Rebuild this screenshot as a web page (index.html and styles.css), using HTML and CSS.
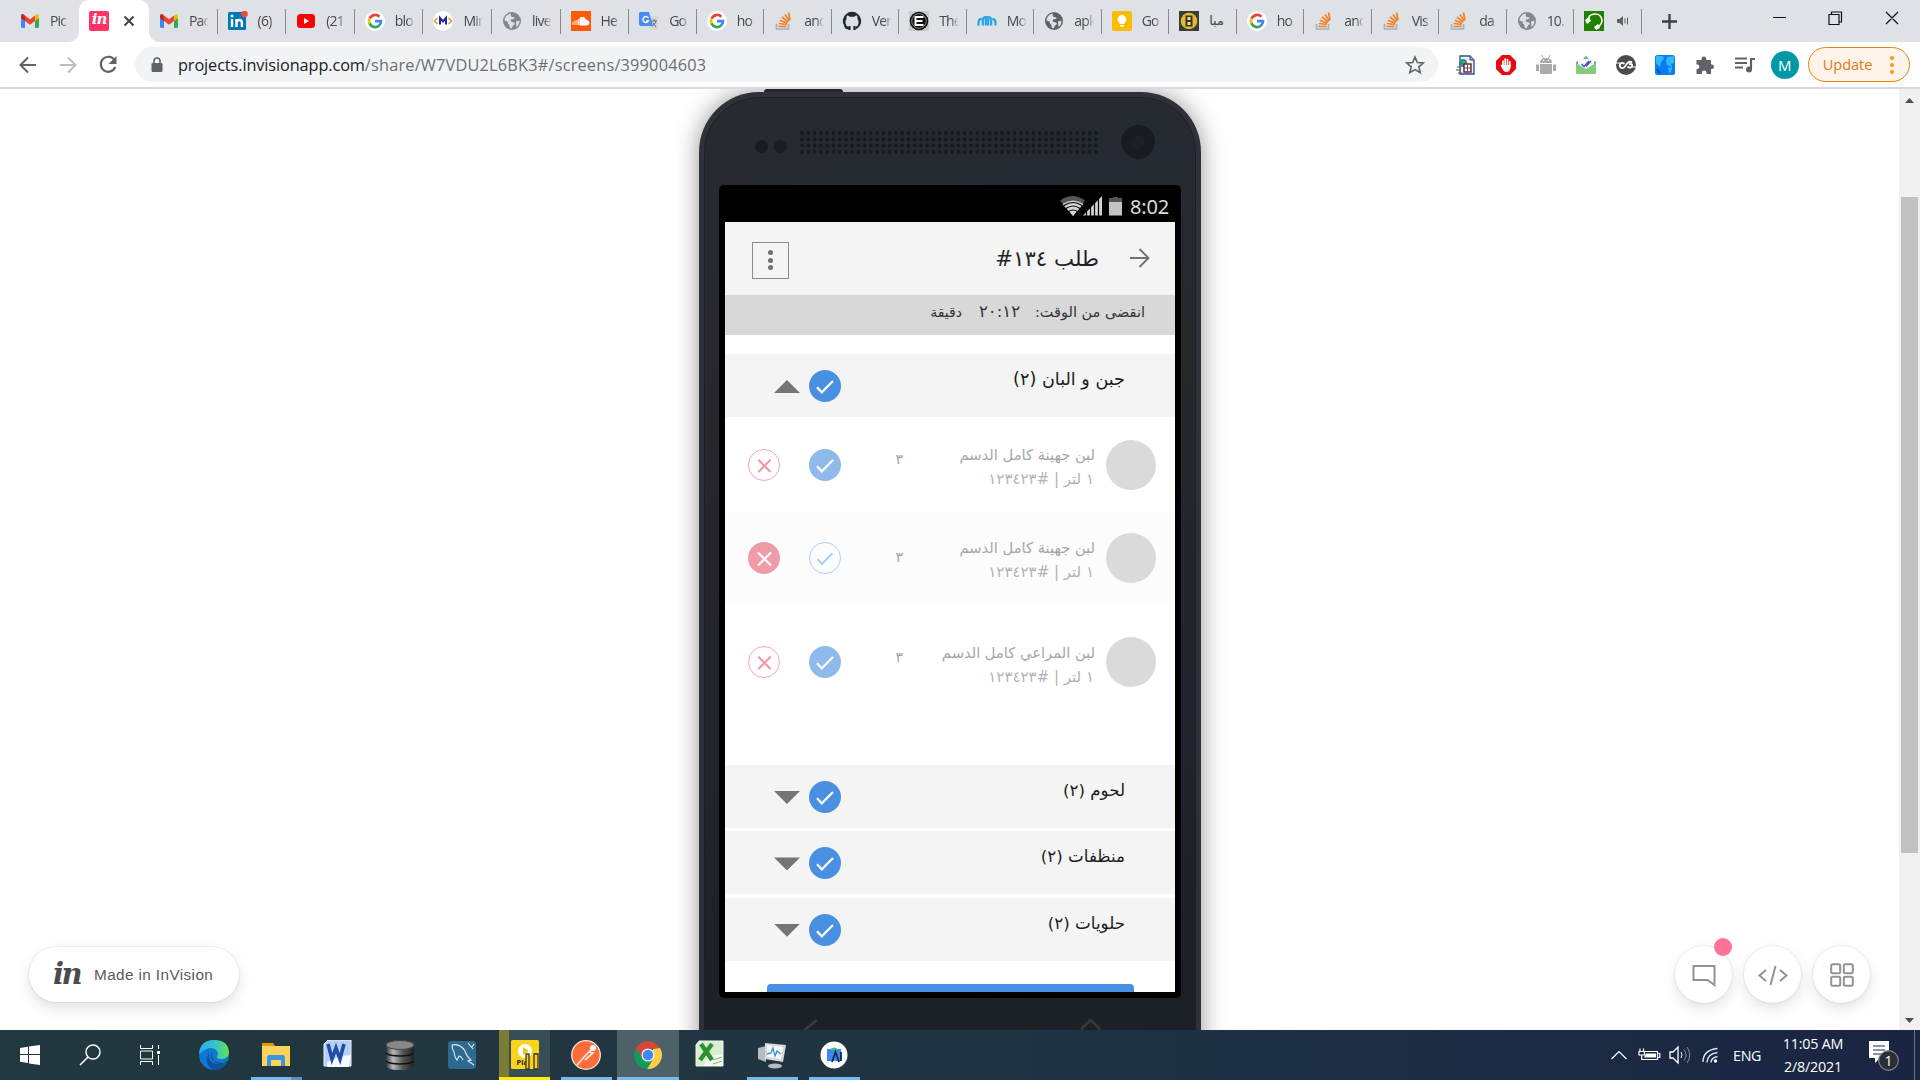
FILE: index.html
```html
<!DOCTYPE html>
<html lang="en">
<head>
<meta charset="utf-8">
<title>InVision prototype</title>
<link rel="stylesheet" href="styles.css">
</head>
<body>
<svg class="sprite" aria-hidden="true">
  <symbol id="gmail" viewBox="0 0 20 20"><path d="M1 5v10.500q0 1.500 1.500 1.500H5V8z" fill="#4285f4"/><path d="M19 5v10.500q0 1.500-1.500 1.500H15V8z" fill="#34a853"/><path d="M15 4.500l1-.9q3-1.500 3 1.600V7l-4 3z" fill="#fbbc04"/><path d="M5 4.500L10 8.300l5-3.800V10l-5 3.800L5 10z" fill="#ea4335"/><path d="M1 7V5.200q0-3.100 3-1.600l1 .9V10z" fill="#c5221f"/></symbol>
  <symbol id="google" viewBox="0 0 20 20"><circle cx="10" cy="10" r="10" fill="#fff"/><g fill="none" stroke-width="2.700"><path d="M4.600 7.500A6 6 0 0 1 14.400 5.800" stroke="#ea4335"/><path d="M4.600 12.600A6 6 0 0 1 4.600 7.400" stroke="#fbbc05"/><path d="M4.500 12.400A6 6 0 0 0 14 14.500" stroke="#34a853"/><path d="M10 10.200h6A6 6 0 0 1 13.800 14.700" stroke="#4285f4"/></g></symbol>
  <symbol id="so" viewBox="0 0 20 20"><path d="M2.500 13v5h12v-5" fill="none" stroke="#a9b0b8" stroke-width="1.700"/><g stroke="#f48024" stroke-width="1.700"><path d="M4.500 15.500h8M4.800 12.500l7.900 1M5.800 9.300l7.400 3M8 6l6.200 5M11 3.500l4.500 6.500M14.500 1.500l1.500 7.500"/></g></symbol>
  <symbol id="globe" viewBox="0 0 20 20"><circle cx="10" cy="10" r="9" fill="currentColor"/><path d="M2.500 9.500Q3 3.500 9 2.500q-1 3 1 3.500 3 0 2.500 1.500-2 1-3.500 1-1 2 1 2.500 2.500 0 3 2l-2 1.500-1.500 3Q7 17 7.500 14 5.500 12.500 5.500 10.500z" fill="#dee1e6"/><path d="M14 10.500l3.500-1q0 4-3 6.500z" fill="#dee1e6"/></symbol>
  <symbol id="check" viewBox="0 0 32 32"><path d="M8 17.300l4.800 5L24 11" fill="none" stroke="currentColor" stroke-width="2.200"/></symbol>
  <symbol id="cross" viewBox="0 0 32 32"><path d="M10 10.500l13 13M23 10.500l-13 13" fill="none" stroke="currentColor" stroke-width="2.200"/></symbol>
</svg>

<header class="tabs">
  <div class="tab first"><svg class="fav"><use href="#gmail"/></svg><span>Pic</span></div>
  <div class="tab active"><b class="in-fav">in</b><svg class="close" viewBox="0 0 12 12"><path d="M1.500 1.500l9 9M10.500 1.500l-9 9"/></svg></div>
  <div class="tab"><svg class="fav"><use href="#gmail"/></svg><span>Pac</span></div>
  <div class="tab"><svg class="fav" viewBox="0 0 20 20"><rect y="1" width="18" height="18" rx="1.500" fill="#0077b5"/><path d="M4 8v8M8.500 16V8M8.500 12q0-3 2.700-3t2.700 3v4" stroke="#fff" stroke-width="2.400" fill="none"/><circle cx="4" cy="5" r="1.500" fill="#fff"/><circle cx="16.500" cy="3" r="3.300" fill="#ee4b3e"/></svg><span>(6)</span></div>
  <div class="tab"><svg class="fav" viewBox="0 0 20 20"><rect x="1" y="3" width="18" height="14" rx="3.500" fill="#f00"/><path d="M8 7v6l5-3z" fill="#fff"/></svg><span>(21</span></div>
  <div class="tab"><svg class="fav"><use href="#google"/></svg><span>blo</span></div>
  <div class="tab"><svg class="fav" viewBox="0 0 20 20"><circle cx="10" cy="10" r="10" fill="#fff"/><path d="M4.500 7L1.500 10l3 3M15.500 7l3 3-3 3" stroke="#e09a2b" stroke-width="1.600" fill="none"/><path d="M7 13.500V7l3 3.500L13 7v6.500" stroke="#182a94" stroke-width="2" fill="none"/></svg><span>Mir</span></div>
  <div class="tab"><svg class="fav grey"><use href="#globe"/></svg><span>live</span></div>
  <div class="tab"><svg class="fav" viewBox="0 0 20 20"><path d="M0 0h20v20H0z" fill="#ff5a0a"/><path d="M9 14V7q5-2 6 2.500 3-.2 3 2.200T15.500 14zM2 14v-3M4 14V9.500M6 14V9M7.700 14V8" fill="#fff" stroke="#fff"/></svg><span>He</span></div>
  <div class="tab"><svg class="fav" viewBox="0 0 20 20"><path d="M8 5h11v14h-8z" fill="#d5d7da"/><path d="M1 1h9l4 14H2q-2 0-2-2V2z" fill="#4a8af4"/><path d="M9.500 7A3 3 0 1 0 9.500 10H7" stroke="#fff" stroke-width="1.300" fill="none"/><path d="M12 10h6M15 8v2M17 10q-1 4-4 5M14 12l3 4" stroke="#5d7181" fill="none"/></svg><span>Go</span></div>
  <div class="tab"><svg class="fav"><use href="#google"/></svg><span>ho</span></div>
  <div class="tab"><svg class="fav"><use href="#so"/></svg><span>and</span></div>
  <div class="tab"><svg class="fav" viewBox="0 0 20 20"><path d="M7.500 19v-4M12.500 19v-4M7.500 17q-3 1-4.500-2" stroke="#24292e" stroke-width="2.200" fill="none"/><path d="M10 .8A9.200 9.200 0 0 0 6.500 18.500V16q-3-1-3-5 0-2 1.200-3.200-.5-1.600.3-3.300 1.400 0 2.800 1.200h4.400Q13.600 4.500 15 4.500q.8 1.700.3 3.300 1.200 1.200 1.200 3.200 0 4-3 5v2.500A9.200 9.200 0 0 0 10 .8z" fill="#24292e"/></svg><span>Ver</span></div>
  <div class="tab"><svg class="fav" viewBox="0 0 20 20"><path d="M0 0h20v20H0z" fill="#c8cacd"/><circle cx="10" cy="10" r="9.300" fill="#111"/><circle cx="10" cy="10" r="7.300" fill="none" stroke="#888"/><path d="M14.500 6H6.500v8h8M6.500 10h7" stroke="#fff" stroke-width="2" fill="none"/></svg><span>The</span></div>
  <div class="tab"><svg class="fav" viewBox="0 0 20 20"><path d="M1.500 14.500V12q0-3.500 3-4.500M5.800 14.500V9.500q0-3.500 3-3.500v8.500M11.200 14.500V6q3 0 3 3.500v5M15.500 7.500q3 1 3 4.500v2.500" stroke="#26a3e4" stroke-width="2.200" fill="none"/></svg><span>Mo</span></div>
  <div class="tab"><svg class="fav dark"><use href="#globe"/></svg><span>apk</span></div>
  <div class="tab"><svg class="fav" viewBox="0 0 20 20"><rect width="20" height="20" rx="2" fill="#fbbc04"/><path d="M10 4a4.300 4.300 0 0 0-2.500 7.800V13h5v-1.200A4.300 4.300 0 0 0 10 4zM8 14h4v1.600H8z" fill="#fff"/></svg><span>Go</span></div>
  <div class="tab"><svg class="fav" viewBox="0 0 20 20"><path d="M0 0h20v20H0z" fill="#3c3c35"/><circle cx="10" cy="10" r="8.300" fill="#e0b93c"/><path d="M6.500 4.500h7v11h-7z" fill="#3a3420"/><path d="M8.500 6h3v3h-3zM8.500 11h3v3h-3z" fill="#f4dc7a"/></svg><span class="ar">مبا</span></div>
  <div class="tab"><svg class="fav"><use href="#google"/></svg><span>ho</span></div>
  <div class="tab"><svg class="fav"><use href="#so"/></svg><span>and</span></div>
  <div class="tab"><svg class="fav"><use href="#so"/></svg><span>Vis</span></div>
  <div class="tab"><svg class="fav"><use href="#so"/></svg><span>da</span></div>
  <div class="tab"><svg class="fav grey"><use href="#globe"/></svg><span>10.</span></div>
  <div class="tab"><svg class="fav" viewBox="0 0 20 20"><path d="M0 0h20v20H0z" fill="#218000"/><path d="M4 10q0-7 7-7 6 0 7 6 0 4-4 7" stroke="#fff" stroke-width="1.600" fill="none"/><path d="M1 9l4-3 2 4-4 3zM10 16l4-3 2 4-4 2z" fill="#fff"/></svg><svg class="sound" viewBox="0 0 14 12"><path d="M1 4h2.500L7 1v10L3.500 8H1z" fill="#5f6368"/><path d="M9 3.500v5M11.500 2.500v7" stroke="#5f6368"/></svg></div>
  <svg class="plus" viewBox="0 0 15 15"><path d="M7.500 0v15M0 7.500h15"/></svg>
  <svg class="winctl" viewBox="0 0 126 14"><path d="M0 6.500h13M56 3.500h10v10H56zM58.500 3V1h10v10h-2M113 1l12 12M125 1l-12 12"/></svg>
</header>

<div class="toolbar">
  <svg class="nav" viewBox="0 0 120 24"><g fill="none" stroke-width="2"><path d="M36 12H21M28 4.500L20.500 12l7.500 7.500" stroke="#5f6368"/><path d="M60 12h15M68 4.500l7.500 7.500-7.500 7.500" stroke="#bbbdc0"/><path d="M114.500 7A7.500 7.500 0 1 0 115.300 14" stroke="#5f6368" stroke-width="2.200"/></g><path d="M116.500 3v8h-8z" fill="#5f6368"/></svg>
  <div class="omni">
    <svg class="lock" viewBox="0 0 12 16"><rect x=".5" y="6" width="11" height="9" rx="1.200" fill="#5f6368"/><path d="M3 6V4a3 3 0 0 1 6 0v2" fill="none" stroke="#5f6368" stroke-width="1.600"/></svg>
    <span class="url"><em>projects.invisionapp.com</em>/share/W7VDU2L6BK3#/screens/399004603</span>
    <svg class="star" viewBox="0 0 20 20"><path d="M10 2l2.300 5.500 6 .5-4.500 3.900 1.400 5.800L10 14.600l-5.200 3.100 1.400-5.800L1.700 8l6-.5z" fill="none" stroke="#5f6368" stroke-width="1.600"/></svg>
  </div>
  <div class="exts">
    <svg viewBox="0 0 20 20"><path d="M4 1h10l4 4v14H4z" fill="#edf2fa" stroke="#2f4e86" stroke-width="1.300"/><path d="M14 1v4h4" fill="#8da8d4" stroke="#2f4e86"/><circle cx="7" cy="8" r="4" fill="#2688a5"/><path d="M5 6l3-1 2 3-3 1z" fill="#42b13f"/><path d="M8 9h7v8H8z" fill="#fff" stroke="#7c2434" stroke-width="1.500"/><path d="M8 13h7M11.500 9v8M1 12h4M0 15h5M2 18h4" stroke="#555"/></svg>
    <svg viewBox="0 0 20 20"><path d="M6 0h8l6 6v8l-6 6H6l-6-6V6z" fill="#e60b12"/><path d="M7 11V6M9.200 10V4M11.500 10V4.500M13.800 11V6.500" stroke="#fff" stroke-width="1.700" stroke-linecap="round"/><path d="M6.200 10h8.500q0 7-4 7-3 0-4.200-3L4.500 10.500l1-1z" fill="#fff"/></svg>
    <svg viewBox="0 0 20 20"><path d="M4 8q0-5 6-5t6 5zM4 9h12v9q0 1-1 1H5q-1 0-1-1zM0 9.500h3V16H0zM17 9.500h3V16h-3z" fill="#ababab"/><path d="M5.500 0l2 3.500M14.500 0l-2 3.500" stroke="#aaa"/><path d="M7 5.500h1M12 5.500h1" stroke="#fff"/></svg>
    <svg viewBox="0 0 20 20"><path d="M7 4l3-3 3 3M0 7l2-1v3H0zM20 7l-2-1v3h2z" fill="#57b368"/><path d="M2.500 4h15v8L10 16l-7.500-4z" fill="#f5f5fc"/><path d="M5.500 9l2.500 2.500L13 6M10 11.500L15 6" stroke="#5449c8" stroke-width="1.400" fill="none"/><path d="M0 8l10 6 10-6v10q0 1-1 1H1q-1 0-1-1z" fill="#82cb7f"/></svg>
    <svg viewBox="0 0 20 20"><circle cx="10" cy="10" r="10" fill="#4b4b4b"/><path d="M16 7.500q-2.500-2-5 1l-2 3q-2 2.500-4.500 1-1.500-2 0-4 2-1.500 4 .5M11.500 11.500q2 2 4 .5 1-1.500.5-2.500-1.500-1-3 0" stroke="#fff" stroke-width="1.800" fill="none"/><path d="M0 8h4M16 12h4" stroke="#fff"/></svg>
    <svg viewBox="0 0 20 20"><rect width="20" height="20" rx="2.500" fill="#087cf0"/><path d="M1 1h7l1 3-3 3-1 5-4-4zM12 2l7-1v7l-3 1 1 3-5-2-1-4zM13 13l4-1-1 5-2 1z" fill="#35b8fb"/><path d="M2 14l3 4" stroke="#0647bd" stroke-width="2"/></svg>
    <svg viewBox="0 0 20 20"><path d="M1.500 5h5V4a2.400 2.400 0 0 1 4.800 0v1h4.700v4.500h.7a2.300 2.300 0 0 1 0 4.600H16V19h-4.500v-1.200a2.300 2.300 0 0 0-4.600 0V19H1.500v-5h1a2.300 2.300 0 0 0 0-4.500h-1z" fill="#5f6368"/></svg>
    <svg viewBox="0 0 20 20"><path d="M0 3.500h12M0 8h12M0 12.500h8" stroke="#5f6368" stroke-width="2"/><path d="M16 14V4h4" stroke="#5f6368" stroke-width="2.200" fill="none"/><circle cx="14" cy="14.500" r="3" fill="#5f6368"/></svg>
  </div>
  <span class="avatar">M</span>
  <div class="update"><span>Update</span><svg viewBox="0 0 4 18"><circle cx="2" cy="2" r="2"/><circle cx="2" cy="9" r="2"/><circle cx="2" cy="16" r="2"/></svg></div>
</div>

<main class="view">
  <aside class="badge"><b>in</b><span>Made in InVision</span></aside>
  <div class="phone-slot">
    <i class="power"></i>
    <div class="phone">
      <div class="face">
        <div class="speaker">
          <i class="sensor"></i><i class="sensor"></i><i class="grille"></i><i class="camera"></i>
        </div>
        <div class="glass">
          <div class="status">
            <svg viewBox="0 0 62 20"><path d="M0 4.500q12.500-9 25 0L13 20z" fill="#555"/><path d="M2.500 8q10.500-7 21 0L13 20z" fill="#d2d2d2"/><path d="M4 9.500q9-6 18 0M6 12.500q7-5 14 0M8.500 15.500q4.500-3 9 0" stroke="#000" stroke-width="1.200" fill="none"/><path d="M23 19.500L42 0v19.500z" fill="#d2d2d2"/><path d="M26.500 10v10M30.500 8v12M34.500 4v16M38.500 2v18" stroke="#000" stroke-width="1.200"/><path d="M49 2h4V1h5v1h4v4H49z" fill="#555"/><path d="M49 6h13v13.500H49z" fill="#c4c4c4"/></svg>
            <span>8:02</span>
          </div>
          <div class="screen">
            <div class="head">
              <div class="more"><i></i><i></i><i></i></div>
              <h1>طلب ١٣٤#</h1>
              <svg viewBox="0 0 20 20"><path d="M0 10h19M9.500 1l9 9-9 9" fill="none" stroke="#707070" stroke-width="1.900"/></svg>
            </div>
            <div class="timer"><span class="t1">انقضى من الوقت:</span><span class="t2">٢٠:١٢</span><span class="t3">دقيقة</span></div>
            <div class="sec open"><i class="tri up"></i><svg class="dot blue"><use href="#check"/></svg><h2>جبن و البان (٢)</h2></div>
            <div class="item a"><svg class="dot redline"><use href="#cross"/></svg><svg class="dot blue"><use href="#check"/></svg><span class="qty">٣</span><div class="desc"><p>لبن جهينة كامل الدسم</p><small>١ لتر | #١٢٣٤٢٣</small></div><i class="pic"></i></div>
            <div class="item b"><svg class="dot red"><use href="#cross"/></svg><svg class="dot blueline"><use href="#check"/></svg><span class="qty">٣</span><div class="desc"><p>لبن جهينة كامل الدسم</p><small>١ لتر | #١٢٣٤٢٣</small></div><i class="pic"></i></div>
            <div class="item c"><svg class="dot redline"><use href="#cross"/></svg><svg class="dot blue"><use href="#check"/></svg><span class="qty">٣</span><div class="desc"><p>لبن المراعي كامل الدسم</p><small>١ لتر | #١٢٣٤٢٣</small></div><i class="pic"></i></div>
            <div class="sec"><i class="tri"></i><svg class="dot blue"><use href="#check"/></svg><h2>لحوم (٢)</h2></div>
            <div class="sec"><i class="tri"></i><svg class="dot blue"><use href="#check"/></svg><h2>منظفات (٢)</h2></div>
            <div class="sec"><i class="tri"></i><svg class="dot blue"><use href="#check"/></svg><h2>حلويات (٢)</h2></div>
            <div class="cta"></div>
          </div>
        </div>
        <svg class="keys" viewBox="0 0 482 36"><path d="M108 22L93 34l15 12M373 36v-6l8.500-8 8.500 8v6" fill="none" stroke="#383a42" stroke-width="2.600"/></svg>
      </div>
    </div>
  </div>
  <nav class="tools">
    <span class="tool"><svg viewBox="0 0 24 24"><path d="M1.500 3h21v19l-7-5h-14z"/></svg><i class="alert"></i></span>
    <span class="tool"><svg class="wide" viewBox="0 0 30 24"><path d="M8 7l-6.500 5.500L8 18M22 7l6.500 5.500L22 18M17.500 3l-5 19"/></svg></span>
    <span class="tool"><svg viewBox="0 0 24 24"><rect x="1.200" y="1.200" width="9" height="9" rx="1.500"/><rect x="13.800" y="1.200" width="9" height="9" rx="1.500"/><rect x="1.200" y="13.800" width="9" height="9" rx="1.500"/><rect x="13.800" y="13.800" width="9" height="9" rx="1.500"/></svg></span>
  </nav>
  <div class="scroll"><i class="up"></i><b></b><i class="down"></i></div>
</main>

<footer class="taskbar">
  <div class="app"><svg viewBox="0 0 30 30"><path d="M5 8l8-1.200V14H5zM14 6.600L25 5v9H14zM5 15h8v8L5 21.800zM14 15h11v10l-11-1.600z" fill="#fff"/></svg></div>
  <div class="app"><svg viewBox="0 0 30 30"><circle cx="18" cy="12" r="7" fill="none" stroke="#fff" stroke-width="1.400"/><path d="M13 17l-8 8" stroke="#fff" stroke-width="1.600"/></svg></div>
  <div class="app"><svg viewBox="0 0 30 30"><path d="M5.500 5v3.500h12V5M5.500 11h12v8h-12zM5.500 25v-3.500h12V25M23.500 5v4M23.500 15v10" fill="none" stroke="#fff"/><path d="M22 11h3v3h-3z" fill="#fff"/></svg></div>
  <div class="app edge"><svg viewBox="0 0 30 30"><defs><linearGradient id="eg"><stop stop-color="#2fa8ee"/><stop offset=".55" stop-color="#33c5c6"/><stop offset="1" stop-color="#6be14e"/></linearGradient></defs><circle cx="15" cy="15" r="15" fill="#0c7ad2"/><path d="M0 14Q1 0 15 0t15 12q0 7-8 7-5 0-4-3 2-2 0-5Q12 4 0 14z" fill="url(#eg)"/><path d="M10 13q-2 14 17 10-4 7-12 7Q4 25 10 13z" fill="#124f9e"/><path d="M13 12q-3 8 5 11 6 2 10-2l1 1q-2 1-7 1-11-1-9-11z" fill="#223740"/></svg></div>
  <div class="app two"><svg viewBox="0 0 30 30"><path d="M1 3h11l2 3H1z" fill="#e19a00"/><path d="M1 6h28v20H1z" fill="#fed35a"/><path d="M6 26V17q0-2 2-2h14q2 0 2 2v9h-4v-6H10v6z" fill="#3b96df"/></svg></div>
  <div class="app"><svg viewBox="0 0 30 30"><path d="M5 0h23v26H1V4z" fill="#b9cff0" stroke="#eef4ff"/><path d="M4 22l14-6 10-1-2 12H4z" fill="#f4f8ff"/><path d="M5 4l4 15 4-11 4 11 4-15" stroke="#1d50ae" stroke-width="3.600" fill="none"/></svg></div>
  <div class="app"><svg viewBox="0 0 30 30"><defs><linearGradient id="cy"><stop stop-color="#333"/><stop offset=".25" stop-color="#bbb"/><stop offset=".6" stop-color="#555"/><stop offset="1" stop-color="#222"/></linearGradient></defs><path d="M1 5v20q0 5 14 5t14-5V5z" fill="url(#cy)"/><path d="M1 13q3 3 14 3t14-3M1 21q3 3 14 3t14-3" fill="none" stroke="#111" stroke-width="1.500"/><ellipse cx="15" cy="5" rx="14" ry="4.500" fill="#888" stroke="#444"/></svg></div>
  <div class="app"><svg viewBox="0 0 30 30"><rect x="1" y="1" width="28" height="28" rx="3" fill="#2c6a90"/><path d="M5 5q8-2 13 6 2 6 6 9l-3 1 6 4M5 5q0 4 2 7 1 6 3 8l2-4q2 0 4 4M21 3l5 6M27 4l-2 3" fill="none" stroke="#e2edf4" stroke-width="1.100"/></svg></div>
  <div class="app player"><svg viewBox="0 0 30 30"><rect x="1" width="28" height="29" rx="1.500" fill="#f8d51c"/><circle cx="15" cy="11" r="7" fill="#fff"/><path d="M13 7v8l6-4z" fill="#f0c70c"/><text x="6.500" y="25" font-size="7.500" font-weight="700" font-family="Open Sans, sans-serif" fill="#222">Pla</text><path d="M16 14h3v15h-3zM24 14h4v15h-4z" fill="#f8d51c" stroke="#333" stroke-width="1.300"/></svg></div>
  <div class="app run"><svg viewBox="0 0 30 30"><circle cx="15" cy="15" r="14.300" fill="#ff6c37" stroke="#f5e7e1" stroke-width="1.300"/><path d="M6 25l8-9 4-4 4 1-8 7M18 12l3-3" stroke="#ffe9df" stroke-width="1.700" fill="none"/><circle cx="22" cy="8" r="3" fill="#fff"/></svg></div>
  <div class="app run chrome"><svg viewBox="0 0 30 30"><path d="M3 8A14 14 0 0 1 27 8L15 8.500 9 18z" fill="#db4437"/><path d="M27 8A14 14 0 0 1 14 29l6-10 0-10z" fill="#fc4"/><path d="M3 8A14 14 0 0 0 14 29l6-10-11-1z" fill="#0f9d58"/><circle cx="15" cy="15" r="6.600" fill="#f1f1f1"/><circle cx="15" cy="15" r="5.200" fill="#4285f4"/></svg></div>
  <div class="app"><svg viewBox="0 0 30 30"><path d="M4 1h24v25H1V5z" fill="#d6efd0" stroke="#eef9ea"/><path d="M13 16l15-2v12H9z" fill="#f2faf0"/><path d="M6 4l11 16M17 4L5 20" stroke="#2e8f33" stroke-width="4.500"/><path d="M18 20l9-3M18 24l9-3" stroke="#77b774"/></svg></div>
  <div class="app run"><svg viewBox="0 0 30 30"><path d="M1 8l8-2v16l-8-3z" fill="#b9bcbf"/><path d="M8 3l21 2-3 17-18-3z" fill="#d5d8da"/><path d="M10 5l16 2-2 12-14-2z" fill="#f2f8fc"/><path d="M10 14l4-1 2-5 2 8 2-5 4 3" stroke="#3c8ec9" fill="none" stroke-width="1.300"/><ellipse cx="18" cy="26" rx="7" ry="2.500" fill="#b9bcbf"/></svg></div>
  <div class="app run"><svg viewBox="0 0 30 30"><circle cx="15" cy="15" r="13.500" fill="#fff"/><path d="M8 9h14v12H8z" fill="#3f85f4"/><path d="M10 10q5-5 10 0z" fill="#2bd078"/><path d="M13 22l3.500-10L20 22M22 12v9" stroke="#0a3143" stroke-width="1.800" fill="none"/></svg></div>
  <div class="tray">
    <svg class="icons" viewBox="0 0 50 24"><path d="M.5 16L8 8.500 15.500 16M34 8.500h12.500v8H33M47 10.500h1.800v4H47M29 5.500v3M32.500 5.500v3M28 8.500h5.500V12H28zM30.700 12v4.500H33" fill="none" stroke="#fff" stroke-width="1.200"/><path d="M35 10.500h10v4H33z" fill="#fff"/></svg>
    <svg class="vol" viewBox="0 0 22 20"><path d="M1 7h3l5-5v16l-5-5H1z" fill="none" stroke="#fff" stroke-width="1.300"/><path d="M12 7q2 3 0 6" fill="none" stroke="#fff"/><path d="M15 4.500q4 5.500 0 11M18 2q5.500 8 0 16" fill="none" stroke="#8590a0"/></svg>
    <svg class="wifi" viewBox="0 0 16 16"><path d="M1 15Q1 3 15.500 1.500M5 15.500Q5 7 15.500 5.500M9 15.500Q9 11 15.500 9.500" fill="none" stroke="#dde2ea" stroke-width="1.400"/><circle cx="13.500" cy="14" r="1.700" fill="#fff"/></svg>
    <span class="lang">ENG</span>
    <span class="clock">11:05 AM<br>2/8/2021</span>
    <svg class="note" viewBox="0 0 32 32"><path d="M1 1h20v17h-9l-5 5v-5H1z" fill="#fff"/><path d="M5 6h12M5 10h12M5 14h8" stroke="#1c2b45" stroke-width="1.200"/><circle cx="20.500" cy="20.500" r="9.800" fill="#2b2e34" stroke="#81868c" stroke-width="1.200"/><text x="20.500" y="25.500" text-anchor="middle" font-size="14" font-family="Open Sans, sans-serif" fill="#fff">1</text></svg>
  </div>
</footer>
</body>
</html>
```
FILE: styles.css
```css
* { box-sizing: border-box; }
body { margin: 0; width: 1920px; height: 1080px; overflow: hidden; background: #fff; font-family: "Open Sans", "Noto Sans", sans-serif; display: grid; grid-template-rows: 42px 47px 941px 50px; }
svg { display: block; flex: none; }
i, em { font-style: normal; }
.sprite { position: absolute; width: 0; height: 0; }

/* tab strip */
.tabs { background: #dee1e6; display: flex; align-items: center; padding-left: 10px; }
.tab { width: 67.5px; flex: none; height: 25px; display: flex; align-items: center; padding-left: 10px; border-right: 1px solid #85888d; }
.tab:nth-child(-n+9) { width: 68.6px; }
.tab.tab.first { width: 69px; border: 0; }
.fav { width: 20px; height: 20px; }
.grey { color: #85888a; }
.dark { color: #5f6368; }
.tab span { margin-left: 10px; width: 25px; white-space: nowrap; font-size: 14px; letter-spacing: -.8px; line-height: 24px; color: #45494d; -webkit-mask-image: linear-gradient(90deg, #000 12px, transparent 20px); }
.tab .ar { font-family: "DejaVu Sans", sans-serif; font-size: 13px; letter-spacing: 0; width: 18px; -webkit-mask-image: none; }
.tab.tab.active { width: 70px; height: 42px; background: #fff; border: 0; border-radius: 10px 10px 0 0; position: relative; }
.tab.active::before, .tab.active::after { content: ""; position: absolute; bottom: 0; left: -10px; width: 10px; height: 10px; background: radial-gradient(circle at 0 0, transparent 9.500px, #fff 10px); }
.tab.active::after { left: auto; right: -10px; background: radial-gradient(circle at 100% 0, transparent 9.500px, #fff 10px); }
.in-fav { width: 20px; height: 20px; background: #ff3366; color: #fff; border-radius: 2px; font: italic bold 15px/17px "DejaVu Serif", serif; letter-spacing: -1px; text-align: center; }
.close { width: 12px; height: 12px; margin-left: 14px; stroke: #3c4043; stroke-width: 1.900; }
.sound { width: 14px; height: 12px; margin-left: 12px; }
.plus { width: 15px; height: 15px; margin-left: 20px; stroke: #3c4043; stroke-width: 2.300; }
.winctl { width: 126px; height: 14px; margin: -6px 0 0 96px; fill: none; stroke: #111; stroke-width: 1.200; }

/* toolbar */
.toolbar { display: flex; align-items: center; border-bottom: 2px solid #d8d9e0; }
.nav { width: 120px; height: 24px; }
.omni { margin-left: 15px; width: 1303px; height: 35px; border-radius: 18px; background: #f1f3f4; display: flex; align-items: center; padding: 0 21px 0 16px; }
.lock { width: 12px; height: 16px; }
.url { margin-left: 15px; font-size: 16.300px; letter-spacing: .21px; color: #6b6f73; white-space: nowrap; }
.url em { color: #202124; letter-spacing: -.1px; }
.star { width: 20px; height: 20px; margin-left: auto; margin-right: -8px; }
.exts { display: flex; gap: 19.900px; margin-left: 18px; }
.exts svg { width: 20px; height: 20px; }
.avatar { width: 28px; height: 28px; margin-left: 15.500px; border-radius: 50%; background: #0097a7; color: #fff; font-size: 15px; line-height: 28px; text-align: center; }
.update { margin-left: 9px; width: 102px; height: 35px; border: 1.500px solid #e8820e; border-radius: 18px; background: #fdf3e9; display: flex; align-items: center; padding: 0 15px 0 14px; justify-content: space-between; color: #df7b12; font-size: 14.500px; }
.update svg { width: 4px; height: 18px; fill: #f79a10; }

/* page */
.view { display: grid; grid-template-columns: 669px 562px 1fr 21px; overflow: hidden; }
.badge { align-self: end; margin: 0 0 28px 29px; width: 210px; height: 55px; border-radius: 28px; background: #fff; box-shadow: 0 0 1px 1px rgba(0,0,0,.06), 0 6px 14px rgba(0,0,0,.12); display: flex; align-items: center; padding-left: 24px; color: #4b4b4b; font: 15.300px "Liberation Sans", sans-serif; }
.badge b { width: 41px; font: italic bold 29px/36px "DejaVu Serif", serif; letter-spacing: -2.500px; padding-bottom: 2px; }
.badge span { letter-spacing: .4px; color: #5a5a5a; }
.phone-slot { height: 941px; overflow: hidden; padding: 0 30px; }
.power { display: block; margin-left: 65px; width: 79px; height: 3px; background: #2c2f38; border-radius: 4px 4px 0 0; }
.phone { width: 502px; height: 1050px; border-radius: 60px 60px 0 0; background: #2e313a; padding: 5px; box-shadow: 0 0 24px rgba(0,0,0,.42); }
.face { height: 100%; border-radius: 55px 55px 0 0; border: 1px solid #1d1f24; background: linear-gradient(170deg, #282a2e, #262a32 12%, #25272b 30%, #20242c 60%, #1b1e25); display: flex; flex-direction: column; padding: 0 14px; }
.speaker { height: 87px; display: flex; padding-left: 36px; }
.sensor { width: 13px; height: 13px; margin: 42px 6px 0 0; border-radius: 50%; background: #1b1c20; }
.grille { width: 300px; height: 25px; margin: 32px 0 0 6px; background: radial-gradient(circle, #17181c 1.700px, transparent 2.200px) 0 0 / 6.250px 6.250px; }
.camera { width: 34px; height: 34px; margin: 27px 0 0 22px; border-radius: 50%; background: radial-gradient(circle, #1c202b 6px, #1a1b20 7px); }
.glass { background: #000; border-radius: 5px; height: 813px; padding: 0 6px 6px; flex: none; }
.status { height: 37px; display: flex; align-items: center; justify-content: flex-end; gap: 8px; padding: 6px 6px 0 0; color: #dcdcdc; font: 20px "Noto Sans", sans-serif; letter-spacing: -.2px; }
.status svg { width: 62px; height: 20px; margin-top: -2px; }
.screen { height: 770px; overflow: hidden; background: #fff; font-family: "DejaVu Sans", sans-serif; direction: ltr; }
.head { height: 72.500px; background: #f4f4f4; display: flex; align-items: center; padding: 0 25px 0 27px; }
.more { width: 37px; height: 37px; margin-top: 4px; border: 1.500px solid #8a8a8a; display: flex; flex-direction: column; align-items: center; justify-content: center; gap: 2.500px; }
.more i { width: 5px; height: 5px; border-radius: 50%; background: #707070; }
h1, h2, p { margin: 0; font-weight: normal; direction: rtl; white-space: nowrap; }
h1 { margin: 2px 0 0 auto; font-size: 21.300px; line-height: 30px; color: #222; }
.head svg { width: 20px; height: 20px; margin: -1px 0 0 31px; }
.timer { height: 40.500px; background: #d8d8d8; direction: rtl; display: flex; padding-right: 30px; font-size: 14.500px; line-height: 34px; color: #333; }
.timer span { white-space: nowrap; }
.t1 { width: 125px; }
.t2 { width: 58px; font-size: 16.500px; }
.t3 { font-size: 14px; }
.sec { height: 63px; margin-bottom: 3.400px; background: #f4f4f4; display: flex; padding-left: 49px; }
.sec.open { margin: 19px 0 0; }
.tri { width: 26px; height: 13px; margin: 26px 9px 0 0; background: #757575; clip-path: polygon(0 0, 100% 0, 50% 100%); }
.tri.up { clip-path: polygon(0 100%, 100% 100%, 50% 0); }
.dot { width: 32px; height: 32px; border-radius: 50%; margin-top: 16px; }
.blue { background: #4a90e2; color: #fff; }
.blueline { border: 1.500px solid #7fb2f2; color: #7fb2f2; }
.red { background: #e76274; color: #fff; }
.redline { border: 1.500px solid #ee7083; color: #e5576b; }
h2 { margin: 12px 50px 0 auto; font-size: 16.700px; line-height: 26px; color: #1c1c1c; }
.open h2 { font-size: 17.600px; }
.item { display: grid; grid-template-columns: 32px 29px 32px 62px 192px 11px 50px; padding-left: 23px; height: 91px; align-items: center; }
.item > * { margin-top: 0; grid-row: 1; }
.item .dot:nth-of-type(2) { grid-column: 3; }
.item .dot { opacity: .62; }
.item.a { height: 95px; }
.item.b { background: #fcfcfc; }
.item.c { height: 162px; padding-bottom: 44px; }
.qty { grid-column: 4; text-align: right; font-size: 14px; line-height: 20px; color: #a2a2a2; padding-bottom: 11px; }
.b .qty { padding-bottom: 2px; }
.desc { grid-column: 5; text-align: right; font-size: 14.700px; line-height: 25px; color: #a6a6a6; direction: rtl; padding-top: 5px; }
.desc small { display: block; font-size: 15px; color: #b2b2b2; padding-right: 1px; white-space: nowrap; }
.pic { grid-column: 7; width: 50px; height: 50px; border-radius: 50%; background: #dadada; }
.cta { margin: 23px 41px 0 42px; height: 40px; border-radius: 4px; background: #4a90e2; }
.keys { width: 482px; height: 36px; margin: 0 -10px; }

.tools { align-self: end; justify-self: end; display: flex; gap: 12px; margin: 0 29px 27px 0; }
.tool { position: relative; width: 57px; height: 57px; border-radius: 50%; background: #fff; box-shadow: 0 0 1px 1px rgba(0,0,0,.06), 0 6px 14px rgba(0,0,0,.11); display: grid; place-items: center; }
.tool svg { width: 24px; height: 24px; fill: none; stroke: #929292; stroke-width: 2; }
.tool .wide { width: 30px; }
.alert { position: absolute; left: 39px; top: -8px; width: 18px; height: 18px; border-radius: 50%; background: #ff7396; }
.scroll { background: #f0f0f0; display: flex; flex-direction: column; align-items: center; padding: 9px 0 7px; }
.scroll b { width: 17px; height: 656px; margin-top: 94px; background: #c1c1c1; }
.scroll i { width: 9px; height: 5px; background: #505050; clip-path: polygon(50% 0, 100% 100%, 0 100%); }
.scroll .down { margin-top: auto; clip-path: polygon(0 0, 100% 0, 50% 100%); }

/* taskbar */
.taskbar { background: linear-gradient(90deg, #223840, #213640 35%, #1e3144 60%, #1b2943 85%, #1a2542); display: flex; }
.app { width: 62px; flex: none; display: grid; place-items: center; }
.app:nth-child(-n+3) { width: 60px; }
.app svg { width: 30px; height: 30px; }
.edge { margin-left: 3px; }
.two { background: linear-gradient(90deg, transparent 6px, #76b9ed 6px 46px, #5b91bc 46px 57px, transparent 57px) 0 100% / 100% 3px no-repeat; }
.run { background: linear-gradient(90deg, transparent 6px, #76b9ed 6px 57px, transparent 57px) 0 100% / 100% 3px no-repeat; }
.app.chrome { background: linear-gradient(#76b9ed, #76b9ed) 0 100% / 100% 3px no-repeat, #4d6169; }
.player { width: 51px; margin: 0 5px 0 6px; background: linear-gradient(#ffee00, #ffee00) 0 100% / 100% 3px no-repeat, linear-gradient(90deg, #797d36 10px, #384e57 10px); }
.tray { margin-left: auto; display: flex; align-items: center; color: #fff; font-size: 14.300px; border-right: 1px solid #6b7484; margin-right: 5px; }
.icons { width: 50px; height: 24px; margin-right: 8px; }
.vol { width: 22px; height: 20px; }
.wifi { width: 16px; height: 16px; margin-left: 11px; }
.lang { width: 30px; margin-left: 15px; letter-spacing: -.3px; }
.clock { width: 80px; margin-left: 10px; text-align: center; line-height: 23px; white-space: nowrap; letter-spacing: -.2px; }
.note { width: 32px; height: 32px; margin: 2px 14px 0 15px; }
```
